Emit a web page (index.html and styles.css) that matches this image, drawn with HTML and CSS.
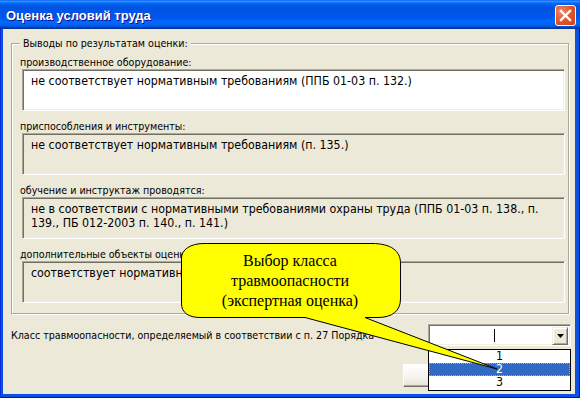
FILE: index.html
```html
<!DOCTYPE html>
<html lang="ru">
<head>
<meta charset="utf-8">
<title>Оценка условий труда</title>
<link rel="stylesheet" href="styles.css">
</head>
<body>
<div class="window">
  <div class="titlebar">
    <span class="title">Оценка условий труда</span>
    <span class="close">
      <svg width="21" height="21" viewBox="0 0 21 21"><path d="M6 6 L15 15 M15 6 L6 15" stroke="#fff" stroke-width="2.4" stroke-linecap="square"/></svg>
    </span>
  </div>
  <div class="client">
    <fieldset class="group">
      <legend>Выводы по результатам оценки:</legend>
      <div class="field">
        <div class="label">производственное оборудование:</div>
        <div class="box box-white">не соответствует нормативным требованиям (ППБ 01-03 п. 132.)</div>
      </div>
      <div class="field">
        <div class="label">приспособления и инструменты:</div>
        <div class="box">не соответствует нормативным требованиям (п. 135.)</div>
      </div>
      <div class="field">
        <div class="label">обучение и инструктаж проводятся:</div>
        <div class="box">не в соответствии с нормативными требованиями охраны труда (ППБ 01-03 п. 138., п. 139., ПБ 012-2003 п. 140., п. 141.)</div>
      </div>
      <div class="field">
        <div class="label">дополнительные объекты оценки:</div>
        <div class="box">соответствует нормативным требованиям</div>
      </div>
    </fieldset>
    <div class="class-row">
      <span class="label">Класс травмоопасности, определяемый в соответствии с п. 27 Порядка</span>
      <div class="combo">
        <div class="combo-input"><span class="caret"></span></div>
        <div class="combo-btn">
          <svg width="7" height="4" viewBox="0 0 7 4"><path d="M0 0 H7 L3.5 4 Z" fill="#000"/></svg>
        </div>
      </div>
    </div>
    <div class="button-row">
      <button class="btn">OK</button>
      <button class="btn">Отмена</button>
    </div>
  </div>
  <ul class="dropdown">
    <li>1</li>
    <li class="sel">2</li>
    <li>3</li>
  </ul>
  <svg class="callout" width="580" height="398" viewBox="0 0 580 398">
    <path d="M204 243.5 H372 C391 243.5 400.5 251 400.5 263 V299 C400.5 311 392 317.5 378 317.5 H365 L497 369 L305 317.5 H200 C188 317.5 181.5 312 181.5 304 V258 C181.5 250 190 243.5 204 243.5 Z" fill="#ffff00" stroke="#000" stroke-width="1"/>
  </svg>
  <div class="callout-text">Выбор класса<br>травмоопасности<br>(экспертная оценка)</div>
</div>
</body>
</html>
```
FILE: styles.css
```css
* { box-sizing: border-box; }

body {
  margin: 0;
  background: #ffffff;
}

.window {
  position: relative;
  width: 580px;
  height: 398px;
  display: flex;
  flex-direction: column;
  padding-bottom: 4px;
  background: #0a50e6;
  box-shadow: inset 1px 0 #0831d9, inset -1px 0 #001ea0, inset 0 -1px #00138c;
  font-family: "DejaVu Sans Condensed", "DejaVu Sans", sans-serif;
}

.titlebar {
  height: 29px;
  flex: none;
  display: flex;
  align-items: center;
  justify-content: space-between;
  padding: 0 4px 0 6px;
  background: linear-gradient(to bottom, #0058ee 0%, #3593ff 4%, #288eff 6%, #127dff 8%, #036ffc 10%, #0262ee 14%, #0057e5 20%, #0054e3 24%, #0055eb 56%, #005bf5 66%, #026afe 76%, #0062ef 86%, #0052d6 92%, #0040ab 94%, #003092 100%);
}

.title {
  color: #ffffff;
  font-family: "Liberation Sans", Arial, sans-serif;
  font-weight: bold;
  font-size: 13px;
  text-shadow: 1px 1px #0f1089;
  margin-top: 2px;
}

.close {
  width: 21px;
  height: 21px;
  margin-top: 2px;
  border: 1px solid #ffffff;
  border-radius: 3px;
  background: radial-gradient(circle at 30% 30%, #f08a6a 0%, #e2582f 45%, #c8401c 100%);
  display: flex;
  align-items: center;
  justify-content: center;
}

.close svg { display: block; margin: -1px; }

.client {
  flex: 1;
  margin: 0 5px 0 3px;
  background: #ece9d8;
  padding: 7px 4px 0 8px;
  display: flex;
  flex-direction: column;
}

.group {
  margin: 0 2px 0 0;
  min-width: 0;
  padding: 5px 3px 10px 8px;
  border: 1px solid #aca899;
  box-shadow: inset 1px 1px 0 #ffffff, 1px 1px 0 #ffffff;
}

.group legend {
  padding: 0 3px;
  font-size: 10.6px;
  line-height: 14px;
  color: #000000;
  background: #ece9d8;
}

.field { margin-bottom: 8px; }
.field:last-child { margin-bottom: 0; }

.label {
  font-size: 10.6px;
  line-height: 14px;
  color: #000000;
  white-space: nowrap;
}

.box {
  margin-left: 2px;
  height: 42px;
  padding: 4px 8px 0 8px;
  font-size: 12.3px;
  line-height: 14px;
  color: #000000;
  background: #ece9d8;
  border: 1px solid;
  border-color: #aca899 #ffffff #ffffff #aca899;
  box-shadow: inset 1px 1px 0 #716f64, inset -1px -1px 0 #f1efe2;
}

.box-white { background: #ffffff; }

.class-row {
  margin-top: 10px;
  display: flex;
  align-items: center;
  justify-content: space-between;
}

.combo {
  width: 143px;
  height: 22px;
  display: flex;
  padding: 2px;
  background: #ffffff;
  border: 1px solid;
  border-color: #aca899 #ffffff #ffffff #aca899;
  box-shadow: inset 1px 1px 0 #716f64, inset -1px -1px 0 #f1efe2;
}

.combo-input {
  flex: 1;
  display: flex;
  align-items: center;
  justify-content: center;
  padding-left: 6px;
}

.caret {
  width: 1px;
  height: 13px;
  background: #000000;
}

.combo-btn {
  width: 16px;
  height: 18px;
  display: flex;
  align-items: center;
  justify-content: center;
  background: #ece9d8;
  border: 1px solid;
  border-color: #f1efe2 #716f64 #716f64 #f1efe2;
  box-shadow: inset 1px 1px 0 #ffffff, inset -1px -1px 0 #aca899;
}

.combo-btn svg { display: block; }

.button-row {
  margin-top: 18px;
  display: flex;
  justify-content: flex-end;
  gap: 8px;
  padding-right: 10px;
}

.btn {
  width: 75px;
  height: 23px;
  padding: 0;
  font-family: inherit;
  font-size: 10.6px;
  color: #000000;
  background: linear-gradient(to bottom, #ffffff 0%, #f4f3ee 60%, #e6e4d8 100%);
  border: 1px solid;
  border-color: #ffffff #716f64 #716f64 #ffffff;
  box-shadow: inset -1px -1px 0 #aca899;
}

.dropdown {
  position: absolute;
  left: 428px;
  top: 349px;
  width: 143px;
  margin: 0;
  padding: 0;
  list-style: none;
  background: #ffffff;
  border: 1px solid #000000;
  z-index: 2;
}

.dropdown li {
  height: 13px;
  line-height: 13px;
  text-align: center;
  font-size: 12.3px;
  color: #000000;
}

.dropdown li:last-child { height: 14px; }

.dropdown li.sel {
  background: #316ac5;
  color: #ffffff;
  outline: 1px dotted #e8a040;
  outline-offset: -1px;
}

.callout {
  position: absolute;
  left: 0;
  top: 0;
  z-index: 3;
  pointer-events: none;
}

.callout-text {
  position: absolute;
  left: 190px;
  top: 251px;
  width: 200px;
  z-index: 4;
  text-align: center;
  font-family: "Liberation Serif", "Times New Roman", serif;
  font-size: 16px;
  line-height: 20px;
  color: #000000;
}
```
